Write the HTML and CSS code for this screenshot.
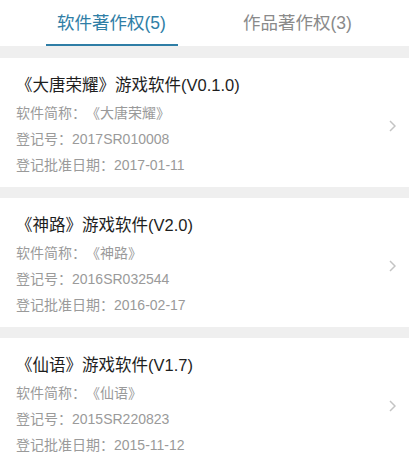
FILE: index.html
```html
<!DOCTYPE html>
<html lang="zh">
<head>
    <meta charset="UTF-8">
    <meta name="viewport" content="width=device-width, initial-scale=1.0">
    <title>著作权</title>
    <link rel="stylesheet" href="styles.css">
</head>
<body>
    <div class="tabs">
        <div class="tab active">软件著作权(5)</div>
        <div class="tab">作品著作权(3)</div>
    </div>

    <div class="list">
        <div class="item">
            <div class="info">
                <div class="name">《大唐荣耀》游戏软件(V0.1.0)</div>
                <div class="line">软件简称：《大唐荣耀》</div>
                <div class="line">登记号：2017SR010008</div>
                <div class="line">登记批准日期：2017-01-11</div>
            </div>
            <svg class="arrow" width="7" height="12" viewBox="0 0 7 12"><path d="M1 1l5 5-5 5" fill="none" stroke="#c4c4c4" stroke-width="1.5"/></svg>
        </div>
        <div class="item">
            <div class="info">
                <div class="name">《神路》游戏软件(V2.0)</div>
                <div class="line">软件简称：《神路》</div>
                <div class="line">登记号：2016SR032544</div>
                <div class="line">登记批准日期：2016-02-17</div>
            </div>
            <svg class="arrow" width="7" height="12" viewBox="0 0 7 12"><path d="M1 1l5 5-5 5" fill="none" stroke="#c4c4c4" stroke-width="1.5"/></svg>
        </div>
        <div class="item">
            <div class="info">
                <div class="name">《仙语》游戏软件(V1.7)</div>
                <div class="line">软件简称：《仙语》</div>
                <div class="line">登记号：2015SR220823</div>
                <div class="line">登记批准日期：2015-11-12</div>
            </div>
            <svg class="arrow" width="7" height="12" viewBox="0 0 7 12"><path d="M1 1l5 5-5 5" fill="none" stroke="#c4c4c4" stroke-width="1.5"/></svg>
        </div>
    </div>
</body>
</html>
```

FILE: styles.css
```css
body {
    margin: 0;
    background-color: #efefef;
    font-family: "Liberation Sans", "Noto Sans CJK SC", sans-serif;
    text-spacing-trim: space-all;
}
.tabs {
    display: flex;
    justify-content: center;
    background: white;
    height: 46px;
}
.tab {
    width: 186px;
    text-align: center;
    font-size: 17.5px;
    line-height: 46px;
    color: #8a8a8a;
    position: relative;
}
.tab.active {
    color: #2f7ea6;
}
.tab.active::after {
    content: "";
    position: absolute;
    left: 27px;
    right: 27px;
    bottom: 0;
    height: 2px;
    background: #2f7ea6;
}
.list {
    padding-top: 12px;
}
.item {
    display: flex;
    align-items: center;
    background: white;
    padding: 15px 13px 9px 16px;
    margin-bottom: 11px;
}
.info {
    flex: 1;
}
.name {
    font-size: 16.5px;
    line-height: 24px;
    color: #1e1e1e;
    margin-bottom: 3px;
}
.line {
    font-size: 14px;
    line-height: 26px;
    color: #9a9a9a;
}
.arrow {
    flex-shrink: 0;
}
```
